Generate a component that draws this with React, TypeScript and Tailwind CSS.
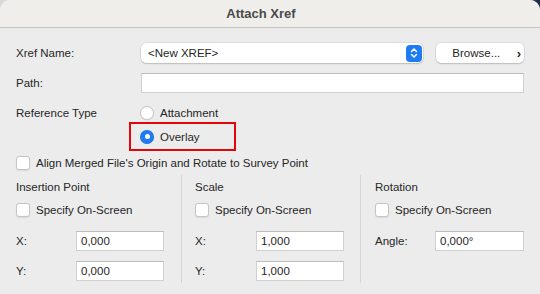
import React from "react";

const font = { fontFamily: '"Liberation Sans", Arial, sans-serif' };

function Radio({ checked }: { checked?: boolean }) {
  return checked ? (
    <span className="flex h-[14px] w-[14px] shrink-0 items-center justify-center rounded-full bg-[#1e7cf2] shadow-[inset_0_0_0_0.5px_rgba(0,0,0,0.15)]">
      <span className="h-[5px] w-[5px] rounded-full bg-white" />
    </span>
  ) : (
    <span className="h-[14px] w-[14px] shrink-0 rounded-full border border-[#c4c4c4] bg-white shadow-[0_0.5px_1px_rgba(0,0,0,0.08)]" />
  );
}

function Check() {
  return (
    <span className="h-[14px] w-[14px] shrink-0 rounded-[3px] border border-[#c6c6c6] bg-white shadow-[0_0.5px_1px_rgba(0,0,0,0.08)]" />
  );
}

function Txt({ children, className = "" }: { children: React.ReactNode; className?: string }) {
  return <span className={`pt-[2px] ${className}`}>{children}</span>;
}

function Field({ value }: { value: string }) {
  return (
    <div className="flex h-[20px] flex-1 items-center border border-[#d0d0d0] border-t-[#bdbdbd] bg-white pl-[4px] text-[#262626]">
      <Txt>{value}</Txt>
    </div>
  );
}

function ValueRow({ label, value, lw }: { label: string; value: string; lw: string }) {
  return (
    <div className="flex h-[20px] items-center">
      <Txt className={`${lw} shrink-0`}>{label}</Txt>
      <Field value={value} />
    </div>
  );
}

function SectionHead({ title }: { title: string }) {
  return <div className="h-[14px] pt-[1px] leading-[14px]">{title}</div>;
}

function CheckRow({ label }: { label: string }) {
  return (
    <div className="mt-[10px] flex h-[14px] items-center gap-[6px]">
      <Check />
      <Txt>{label}</Txt>
    </div>
  );
}

export default function App() {
  return (
    <div className="h-[294px] w-[540px] bg-[linear-gradient(90deg,#d9d9d9_0%,#d9d9d9_85%,#1b2a47_100%)]" style={font}>
      <div className="flex h-full w-full flex-col overflow-hidden rounded-t-[10px] bg-[#ececec] text-[11.5px] text-[#262626]">
        <div className="flex h-[28px] shrink-0 items-center justify-center border-b border-[#c4c4c4] bg-[#efeeea] pr-[18px] text-[13px] font-bold text-[#4a4a4a]">
          Attach Xref
        </div>

        <div className="flex flex-col pl-[16px] pr-[16px] pt-[15px]">
          <div className="flex h-[20px] items-center">
            <Txt className="w-[125px] shrink-0">Xref Name:</Txt>
            <div className="flex h-[20px] w-[282px] items-center justify-between rounded-[5px] bg-white pl-[7px] pr-[1px] shadow-[0_0_0_0.5px_rgba(0,0,0,0.12),0_1px_1.5px_rgba(0,0,0,0.15)]">
              <Txt>&lt;New XREF&gt;</Txt>
              <span className="flex h-[17px] w-[16px] items-center justify-center rounded-[4px] bg-[#1e7cf2]">
                <svg width="8" height="12" viewBox="0 0 8 12" fill="none" stroke="white" strokeWidth="1.5" strokeLinecap="round" strokeLinejoin="round">
                  <path d="M1.5 4.5 L4 2 L6.5 4.5" />
                  <path d="M1.5 7.5 L4 10 L6.5 7.5" />
                </svg>
              </span>
            </div>
            <div className="ml-[13px] flex h-[20px] w-[88px] items-center rounded-[5px] bg-white pr-[3px] shadow-[0_0_0_0.5px_rgba(0,0,0,0.12),0_1px_1.5px_rgba(0,0,0,0.15)]">
              <Txt className="flex-1 text-center">Browse...</Txt>
              <span className="text-[13px] font-bold leading-none">›</span>
            </div>
          </div>

          <div className="mt-[10px] flex h-[20px] items-center">
            <Txt className="w-[125px] shrink-0">Path:</Txt>
            <Field value="" />
          </div>

          <div className="mt-[13px] flex h-[14px] items-center">
            <Txt className="w-[124px] shrink-0">Reference Type</Txt>
            <span className="flex items-center gap-[6px]">
              <Radio />
              <Txt>Attachment</Txt>
            </span>
          </div>

          <div className="mt-[2px] flex">
            <div className="ml-[113px] flex h-[29px] w-[107px] items-center gap-[6px] border-2 border-[#e1060a] pl-[9px]">
              <Radio checked />
              <Txt>Overlay</Txt>
            </div>
          </div>

          <div className="mt-[5px] flex h-[14px] items-center gap-[6px]">
            <Check />
            <Txt>Align Merged File's Origin and Rotate to Survey Point</Txt>
          </div>
        </div>

        <div className="mt-[5px] flex">
          <div className="flex w-[181px] flex-col pl-[16px] pr-[17px] pt-[4px] pb-[2px]">
            <SectionHead title="Insertion Point" />
            <CheckRow label="Specify On-Screen" />
            <div className="mt-[14px]">
              <ValueRow label="X:" value="0,000" lw="w-[60px]" />
            </div>
            <div className="mt-[10px]">
              <ValueRow label="Y:" value="0,000" lw="w-[60px]" />
            </div>
          </div>
          <div className="flex w-[179px] flex-col border-l border-[#d6d6d6] pl-[13px] pr-[16px] pt-[4px] pb-[2px]">
            <SectionHead title="Scale" />
            <CheckRow label="Specify On-Screen" />
            <div className="mt-[14px]">
              <ValueRow label="X:" value="1,000" lw="w-[61px]" />
            </div>
            <div className="mt-[10px]">
              <ValueRow label="Y:" value="1,000" lw="w-[61px]" />
            </div>
          </div>
          <div className="flex w-[180px] flex-col border-l border-[#d6d6d6] pl-[14px] pr-[16px] pt-[4px] pb-[2px]">
            <SectionHead title="Rotation" />
            <CheckRow label="Specify On-Screen" />
            <div className="mt-[14px]">
              <ValueRow label="Angle:" value="0,000°" lw="w-[60px]" />
            </div>
          </div>
        </div>
      </div>
    </div>
  );
}
